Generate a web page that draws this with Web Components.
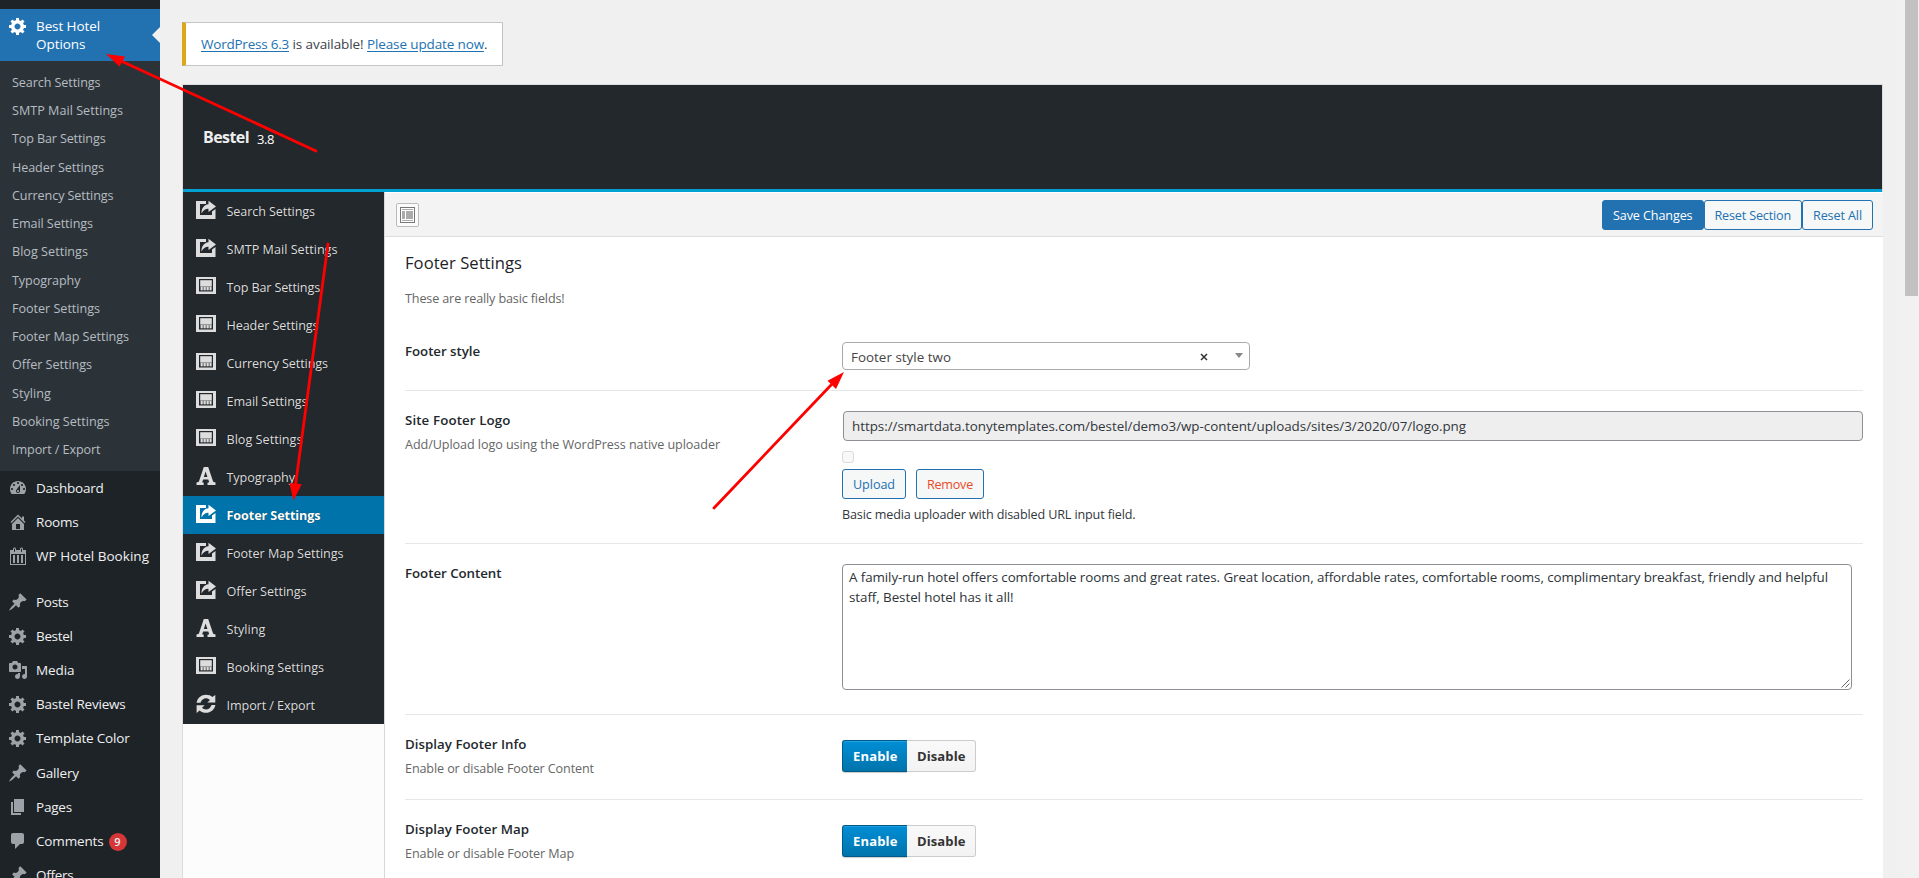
<!DOCTYPE html>
<html lang="en">
<head>
<meta charset="utf-8">
<title>Best Hotel Options</title>
<style>
    html, body {
        margin: 0;
        height: 878px;
        overflow: hidden;
    }
    body {
        display: flex;
        position: relative;
        background: #f0f0f0;
        color: #3c434a;
        font-family: "Open Sans", "Noto Sans", sans-serif;
        font-size: 12.6px;
        line-height: 18px;
    }
    main {
        flex: 1;
        min-width: 0;
        padding: 22px 20px 0 22px;
    }
</style>
</head>
<body>
<admin-menu></admin-menu>
<main>
    <update-notice></update-notice>
    <options-panel>
        <option-row class="first" label="Footer style" lw="75" height="72">
            <select-box></select-box>
        </option-row>
        <option-row label="Site Footer Logo" lw="105.5" desc="Add/Upload logo using the WordPress native uploader" dw="315" height="152">
            <media-field></media-field>
        </option-row>
        <option-row label="Footer Content" lw="96.5" height="170">
            <text-area></text-area>
        </option-row>
        <option-row label="Display Footer Info" lw="121.5" desc="Enable or disable Footer Content" dw="189" height="84">
            <toggle-switch></toggle-switch>
        </option-row>
        <option-row label="Display Footer Map" lw="124" desc="Enable or disable Footer Map" dw="169" height="84">
            <toggle-switch></toggle-switch>
        </option-row>
    </options-panel>
</main>
<page-scrollbar></page-scrollbar>
<red-arrows></red-arrows>

<script>
const ICONS = {
    gear: '<path d="M18 12h-2.18c-.17.7-.44 1.35-.81 1.93l1.54 1.54-2.1 2.1-1.54-1.54c-.58.36-1.23.63-1.91.79V19H8v-2.18c-.68-.16-1.33-.43-1.91-.79l-1.54 1.54-2.12-2.12 1.54-1.54c-.36-.58-.63-1.23-.79-1.91H1V9.03h2.17c.16-.7.44-1.35.8-1.94L2.43 5.55l2.1-2.1 1.54 1.54c.58-.37 1.24-.64 1.93-.81V2h3v2.18c.68.16 1.33.43 1.91.79l1.54-1.54 2.12 2.12-1.54 1.54c.36.59.64 1.24.8 1.94H18V12zm-8.5 1.5c1.66 0 3-1.34 3-3s-1.34-3-3-3-3 1.34-3 3 1.34 3 3 3z"/>',
    dashboard: '<path fill-rule="evenodd" d="M3.76 16h12.48c1.1-1.37 1.76-3.11 1.76-5 0-4.42-3.58-8-8-8s-8 3.58-8 8c0 1.89.66 3.63 1.76 5zM10 4c.55 0 1 .45 1 1s-.45 1-1 1-1-.45-1-1 .45-1 1-1zM6 6c.55 0 1 .45 1 1s-.45 1-1 1-1-.45-1-1 .45-1 1-1zm8 0c.55 0 1 .45 1 1s-.45 1-1 1-1-.45-1-1 .45-1 1-1zm-5.37 5.55L12 7v6c0 1.1-.9 2-2 2s-2-.9-2-2c0-.57.24-1.08.63-1.45zM4 10c.55 0 1 .45 1 1s-.45 1-1 1-1-.45-1-1 .45-1 1-1zm12 0c.55 0 1 .45 1 1s-.45 1-1 1-1-.45-1-1 .45-1 1-1zm-5 3c0-.55-.45-1-1-1s-1 .45-1 1 .45 1 1 1 1-.45 1-1z"/>',
    home: '<path d="M16 8.5l1.53 1.53-1.06 1.06L10 4.6l-6.47 6.49-1.06-1.06L10 2.5l4 4v-2h2v4zm-6-2.46l6 5.99V18H4v-5.97zM12 17v-5H8v5h4z"/>',
    calendar: '<path fill-rule="evenodd" d="M15 4h3v15H2V4h3V3c0-.83.67-1.5 1.5-1.5S8 2.17 8 3v1h4V3c0-.83.67-1.5 1.5-1.5S15 2.17 15 3v1zM6 3v2.5c0 .28.22.5.5.5s.5-.22.5-.5V3c0-.28-.22-.5-.5-.5S6 2.72 6 3zm7 0v2.5c0 .28.22.5.5.5s.5-.22.5-.5V3c0-.28-.22-.5-.5-.5s-.5.22-.5.5zm4 15V8H3v10h14z"/><path d="M5 9h2v8H5zM9 9h2v8H9zM13 9h2v8h-2z"/>',
    pin: '<path d="M10.44 3.02l1.82-1.82 6.36 6.35-1.83 1.82c-1.05-.68-2.48-.57-3.41.36l-.75.75c-.92.93-1.04 2.35-.35 3.41l-1.83 1.82-2.41-2.41-2.8 2.79c-.42.42-3.38 2.71-3.8 2.29s1.86-3.39 2.28-3.81l2.79-2.79L4.1 9.36l1.83-1.82c1.05.69 2.48.57 3.4-.36l.75-.75c.93-.92 1.05-2.35.36-3.41z"/>',
    media: '<path fill-rule="evenodd" d="M13 11V4c0-.55-.45-1-1-1h-1.67L9 1H5L3.67 3H2c-.55 0-1 .45-1 1v7c0 .55.45 1 1 1h10c.55 0 1-.45 1-1zM7 4.5c1.38 0 2.5 1.12 2.5 2.5S8.38 9.5 7 9.5 4.5 8.38 4.5 7 5.62 4.5 7 4.5zM14 6h5v10.5c0 1.38-1.12 2.5-2.5 2.5S14 17.88 14 16.5s1.12-2.5 2.5-2.5c.17 0 .34.02.5.05V9h-3V6zm-4 8.05V13h2v3.5c0 1.38-1.12 2.5-2.5 2.5S7 17.88 7 16.5 8.12 14 9.5 14c.17 0 .34.02.5.05z"/>',
    page: '<path d="M6 15V2h10v13H6zm-1 1h8v2H3V5h2v11z"/>',
    comment: '<path d="M5 2h9c1.1 0 2 .9 2 2v7c0 1.1-.9 2-2 2h-2l-5 5v-5H5c-1.1 0-2-.9-2-2V4c0-1.1.9-2 2-2z"/>',
    share: '<path d="M0 1h10v3H4v11h12v-3.500l3.500-2.500V19H0z"/><path d="M12.500 .8L20 6.500l-7.500 5.500V8.800C9.500 8.600 7.500 10 5.500 13.500 5.300 8.500 8 4.600 12.500 4.200z"/>',
    screen: '<path fill-rule="evenodd" d="M0 1h20v17H0zM3 3v12.500h14V3z"/><path d="M4.200 4.200h11.600v6.300H4.200z"/><path d="M4.200 10.500h11.600v3.800H4.200z" opacity=".55"/><path d="M5 11h1.500v3.300H5zM8 11h1.500v3.300H8zM11 11h1.500v3.300H11zM14 11h1.300v3.300H14z"/>',
    font: '<path fill-rule="evenodd" d="M7.800 1h4.400l5 14.800 2.300.7V19h-8v-2.200l1.700-.6-.9-2.700H7.100l-.9 2.700 1.500.6V19H.5v-2.500l2.300-.7zM9.600 5.600L7.900 10.900h3.500z"/>',
    refresh: '<path d="M.6 8.700C1.400 4 5.300.8 10.100.8c2.500 0 4.600.8 6.300 2.300L19.300.9v7.600h-8l2.700-2.600c-3.400-3-7.800-1.900-9.500 2.800zM19.400 10.900c-.9 4.600-4.700 7.900-9.500 7.900-2.500 0-4.600-.8-6.300-2.300L.6 18.900v-7.700h8.100L6 13.800c3.400 3 7.800 1.800 9.500-2.900z"/>'
};

// attach an open shadow root with the given markup
function render(el, html) {
    const root = el.attachShadow({ mode: "open" });
    root.innerHTML = html;
    return root;
}

// a run of text set to a given width
class FitText extends HTMLElement {
    connectedCallback() {
        if (this.shadowRoot) return;
        const root = render(this, `<style>
            :host{ display : inline-block; white-space : nowrap; }
            :host([link]) span{ text-decoration : underline; text-underline-offset : 2px; }
        </style><span><slot></slot></span>`);
        const width = parseFloat(this.getAttribute("w"));
        const natural = root.querySelector("span").getBoundingClientRect().width;
        this.style.letterSpacing = (width - natural) / this.textContent.length + "px";
        this.style.width = width + "px";
    }
}

class UiIcon extends HTMLElement {
    connectedCallback() {
        if (this.shadowRoot) return;
        render(this, `<style>
            :host{ display : block; width : 20px; height : 20px; }
            svg{ display : block; fill : currentColor; }
        </style><svg width="20" height="20" viewBox="0 0 20 20">${ICONS[this.getAttribute("name")]}</svg>`);
    }
}

class MenuEntry extends HTMLElement {
    constructor() {
        super();
        render(this, `<style>
            :host{
                display : flex;
                position : relative;
                height : 34.14px;
                color : #f0f0f1;
                font-size : 13.5px;
                line-height : 18.2px;
            }
            :host([current]){ height : 52px; background : #2271b1; color : #fff; }
            :host([current])::after{
                content : "";
                position : absolute;
                right : 0;
                top : 18px;
                border : 8px solid transparent;
                border-left : 0;
                border-right-color : #f0f0f0;
            }
            ui-icon{ width : 20px; margin : 7px 8px 0 8px; color : #9ca2a7; }
            :host([current]) ui-icon{ color : #fff; }
            .name{ padding-top : 8px; display : flex; }
            :host([current]) .name{ flex-direction : column; }
        </style>
        <ui-icon name="${this.getAttribute("icon")}"></ui-icon>
        <div class="name"><slot></slot></div>`);
    }
}

class AdminMenu extends HTMLElement {
    constructor() {
        super();
        const sub = SECTIONS.map(([name, w]) => `<li><fit-text w="${w}">${name}</fit-text></li>`).join("");
        const entry = ([icon, name, w]) => `<menu-entry icon="${icon}"><fit-text w="${w}">${name}</fit-text></menu-entry>`;
        const top = [["dashboard", "Dashboard", 67.5], ["home", "Rooms", 42.5], ["calendar", "WP Hotel Booking", 113]];
        const rest = [
            ["pin", "Posts", 32.5], ["gear", "Bestel", 36.5], ["media", "Media", 38.5],
            ["gear", "Bastel Reviews", 89.5], ["gear", "Template Color", 93.5],
            ["pin", "Gallery", 43], ["page", "Pages", 36]
        ];
        render(this, `<style>
            :host{
                display : block;
                flex : none;
                box-sizing : border-box;
                width : 160px;
                height : 878px;
                padding-top : 9px;
                overflow : hidden;
                background : #1d2327;
            }
            ul{
                margin : 0;
                padding : 8px 0 7px 12px;
                height : 395px;
                list-style : none;
                background : #2c3338;
                color : #b5bcc2;
            }
            li{ height : 28.24px; line-height : 28.24px; }
            .gap{ height : 11.6px; }
            b{
                width : 18px;
                height : 18px;
                margin : 1px 0 0 5px;
                border-radius : 50%;
                background : #d63638;
                font-size : 11px;
                font-weight : 600;
                line-height : 18px;
                text-align : center;
            }
        </style>
        <menu-entry icon="gear" current><fit-text w="64">Best Hotel</fit-text><fit-text w="49.5">Options</fit-text></menu-entry>
        <ul>${sub}</ul>
        ${top.map(entry).join("")}
        <div class="gap"></div>
        ${rest.map(entry).join("")}
        <menu-entry icon="comment"><fit-text w="67.5">Comments</fit-text><b>9</b></menu-entry>
        <menu-entry icon="pin"><fit-text w="37.5">Offers</fit-text></menu-entry>`);
    }
}

class UpdateNotice extends HTMLElement {
    constructor() {
        super();
        render(this, `<style>
            :host{
                display : block;
                box-sizing : border-box;
                width : 321px;
                height : 44px;
                padding-left : 15px;
                border : 1px solid #c3c4c7;
                border-left : 4px solid #dba617;
                background : #fff;
                font-size : 13.5px;
                line-height : 42px;
                white-space : nowrap;
            }
            a{ color : #2271b1; }
        </style><a><fit-text link w="88">WordPress 6.3</fit-text></a>&nbsp;<fit-text w="71">is available!</fit-text>&nbsp;<a><fit-text link w="117">Please update now</fit-text></a>.`);
    }
}

class SectionTab extends HTMLElement {
    constructor() {
        super();
        render(this, `<style>
            :host{
                display : flex;
                align-items : center;
                height : 38px;
                padding-left : 13px;
                gap : 10.5px;
                color : #ddd;
                font-weight : 500;
                text-shadow : 0 0 1px rgba(0, 0, 0, 0.6);
            }
            :host([active]){ background : #0073aa; color : #fff; font-weight : 700; }
            ui-icon{ margin-bottom : 2px; }
            .name{ padding-top : 2px; }
        </style><ui-icon name="${this.getAttribute("icon")}"></ui-icon><div class="name"><slot></slot></div>`);
    }
}

class WpButton extends HTMLElement {
    constructor() {
        super();
        render(this, `<style>
            :host{
                display : block;
                box-sizing : border-box;
                height : 30px;
                padding : 0 10px;
                border : 1px solid #2271b1;
                border-radius : 3px;
                background : #f6f7f7;
                color : #2271b1;
                line-height : 29px;
            }
            :host([primary]){ background : #2271b1; color : #fff; }
            :host([danger]){ color : #ea4b26; }
        </style><slot></slot>`);
    }
}

class OptionsPanel extends HTMLElement {
    constructor() {
        super();
        const tabs = SECTIONS.map(([name, w, icon]) => name === "Footer Settings"
            ? `<section-tab icon="${icon}" active><fit-text w="94">${name}</fit-text></section-tab>`
            : `<section-tab icon="${icon}"><fit-text w="${w}">${name}</fit-text></section-tab>`).join("");
        render(this, `<style>
            :host{
                display : block;
                margin-top : 18px;
                border : 1px solid #dcdcde;
                height : 800px;
                background : #fcfcfc;
            }
            header{
                display : flex;
                align-items : center;
                box-sizing : border-box;
                height : 107px;
                padding-left : 20px;
                gap : 8px;
                border-bottom : 3px solid #00a0d2;
                background : #23282d;
                color : #eee;
            }
            h2{ margin : 0; font-size : 16px; font-weight : 700; }
            .version{ margin-top : 4px; font-size : 13px; color : #fff; }
            .body{ display : flex; height : 690px; }
            nav{ width : 201px; flex : none; }
            .tabs{ background : #23282d; }
            .main{ flex : 1; border-left : 1px solid #d8d8d8; background : #fff; }
            .bar{
                display : flex;
                align-items : center;
                justify-content : space-between;
                box-sizing : border-box;
                height : 45px;
                padding : 0 10px 0 11px;
                border-bottom : 1px solid #dedede;
                border-top : 1px solid #fff;
                background : #f3f3f3;
            }
            .buttons{ display : flex; margin-top : 1px; }
            .expand{
                display : grid;
                place-items : center;
                box-sizing : border-box;
                width : 23px;
                height : 24px;
                border : 1px solid #bbb;
                border-radius : 2px;
                background : #fbfbfb;
            }
            .content{ padding : 0 20px; }
            h3{ margin : 0; padding-top : 13px; font-size : 16.6px; font-weight : 500; line-height : 26px; color : #1d2327; }
            p{ margin : 13px 0 9px; line-height : 20px; color : #666; }
        </style>
        <header><h2><fit-text w="46">Bestel</fit-text></h2><div class="version"><fit-text w="17">3.8</fit-text></div></header>
        <div class="body">
            <nav><div class="tabs">${tabs}</div></nav>
            <div class="main">
                <div class="bar">
                    <div class="expand">
                        <svg width="15" height="16" viewBox="0 0 15 16">
                            <rect x=".5" y=".5" width="14" height="15" fill="#fff" stroke="#777"/>
                            <path d="M2 2h11v1H2zM2 4h3v8H2zM6 4h7v8H6zM2 13h11v1H2z" fill="#aaa"/>
                        </svg>
                    </div>
                    <div class="buttons">
                        <wp-button primary><fit-text w="79.5">Save Changes</fit-text></wp-button>
                        <wp-button><fit-text w="76.5">Reset Section</fit-text></wp-button>
                        <wp-button><fit-text w="49">Reset All</fit-text></wp-button>
                    </div>
                </div>
                <div class="content">
                    <h3><fit-text w="117">Footer Settings</fit-text></h3>
                    <p><fit-text w="159.5">These are really basic fields!</fit-text></p>
                    <slot></slot>
                </div>
            </div>
        </div>`);
    }
}

class OptionRow extends HTMLElement {
    constructor() {
        super();
        const desc = this.getAttribute("desc");
        render(this, `<style>
            :host{
                display : flex;
                box-sizing : content-box;
                height : ${this.getAttribute("height")}px;
                border-bottom : 1px solid #e7e7e7;
            }
            .head{ width : 437px; flex : none; padding-top : 19px; }
            :host(.first) .head{ padding-top : 23px; }
            .label{ font-size : 13.3px; font-weight : 600; line-height : 20px; color : #23282d; }
            .desc{ margin-top : 5px; line-height : 20px; color : #666; }
            .field{ flex : 1; padding-top : 20px; }
        </style>
        <div class="head">
            <div class="label"><fit-text w="${this.getAttribute("lw")}">${this.getAttribute("label")}</fit-text></div>
            ${desc ? `<div class="desc"><fit-text w="${this.getAttribute("dw")}">${desc}</fit-text></div>` : ""}
        </div>
        <div class="field"><slot></slot></div>`);
    }
}

class SelectBox extends HTMLElement {
    constructor() {
        super();
        render(this, `<style>
            :host{
                display : flex;
                align-items : center;
                box-sizing : border-box;
                width : 408px;
                height : 28px;
                margin-top : 4px;
                padding : 0 6px 0 8px;
                border : 1px solid #aaa;
                border-radius : 4px;
                color : #444;
                font-size : 13.4px;
            }
            fit-text{ padding-top : 2px; }
            .clear{ margin : 2px 27px 0 auto; }
            i{ margin-top : -1px; border : 4px solid transparent; border-top : 5px solid #888; border-bottom : 0; }
            svg{ display : block; }
        </style>
        <fit-text w="100">Footer style two</fit-text>
        <svg class="clear" width="8" height="8" viewBox="0 0 8 8"><path d="M1 1l6 6M7 1L1 7" stroke="#333" stroke-width="1.5"/></svg>
        <i></i>`);
    }
}

class MediaField extends HTMLElement {
    constructor() {
        super();
        render(this, `<style>
            :host{ display : block; color : #32373c; }
            .url{
                box-sizing : border-box;
                width : 1020px;
                height : 30px;
                margin-left : 1px;
                padding-left : 8px;
                border : 1px solid #8c8f94;
                border-radius : 4px;
                background : #eee;
                font-size : 13.4px;
                line-height : 28px;
            }
            .check{
                box-sizing : border-box;
                width : 12px;
                height : 12px;
                margin : 10px 0 6px;
                border : 1px solid #dcdcde;
                border-radius : 3px;
                background : #f8f8f8;
            }
            .buttons{ display : flex; gap : 10px; }
            .note{ margin-top : 7px; }
        </style>
        <div class="url"><fit-text w="614">https://smartdata.tonytemplates.com/bestel/demo3/wp-content/uploads/sites/3/2020/07/logo.png</fit-text></div>
        <div class="check"></div>
        <div class="buttons">
            <wp-button><fit-text w="42">Upload</fit-text></wp-button>
            <wp-button danger><fit-text w="46">Remove</fit-text></wp-button>
        </div>
        <div class="note"><fit-text w="293.5">Basic media uploader with disabled URL input field.</fit-text></div>`);
    }
}

class TextArea extends HTMLElement {
    constructor() {
        super();
        render(this, `<style>
            :host{
                display : flex;
                flex-direction : column;
                position : relative;
                box-sizing : border-box;
                width : 1010px;
                height : 126px;
                padding : 2px 6px;
                border : 1px solid #8c8f94;
                border-radius : 4px;
                background : #fff;
                color : #2c3338;
                font-size : 13.4px;
                line-height : 20px;
            }
            svg{ position : absolute; right : 1px; bottom : 1px; }
        </style>
        <fit-text w="979">A family-run hotel offers comfortable rooms and great rates. Great location, affordable rates, comfortable rooms, complimentary breakfast, friendly and helpful</fit-text>
        <fit-text w="164.5">staff, Bestel hotel has it all!</fit-text>
        <svg width="9" height="9" viewBox="0 0 9 9"><path d="M.5 8.5l8-8M4.500 8.500l4-4" stroke="#555" stroke-width=".9"/></svg>`);
    }
}

class ToggleSwitch extends HTMLElement {
    constructor() {
        super();
        render(this, `<style>
            :host{ display : flex; padding-top : 5px; font-weight : 700; font-size : 13px; line-height : 30px; }
            div{ box-sizing : border-box; height : 32px; border : 1px solid; }
            .on{
                width : 65px;
                padding-left : 10px;
                border-color : #005a87;
                border-right : 0;
                border-radius : 3px 0 0 3px;
                background : linear-gradient(#008ed6, #0074ab);
                box-shadow : inset 0 1px 0 #20a0e0, 0 1px 1px rgba(0, 0, 0, 0.2);
                color : #fff;
            }
            .off{
                width : 69px;
                padding-left : 10px;
                border-color : #ccc;
                border-left : 0;
                border-radius : 0 3px 3px 0;
                background : linear-gradient(#f9f9f9, #f3f3f3);
                color : #333;
            }
        </style>
        <div class="on"><fit-text w="44.5">Enable</fit-text></div>
        <div class="off"><fit-text w="48.5">Disable</fit-text></div>`);
    }
}

class PageScrollbar extends HTMLElement {
    constructor() {
        super();
        render(this, `<style>
            :host{ display : block; flex : none; box-sizing : border-box; width : 16px; padding : 0 1px 0 2px; background : #f1f1f1; }
            div{ height : 296px; background : #c1c1c1; }
        </style><div></div>`);
    }
}

// annotation arrows lying over the whole page
class RedArrows extends HTMLElement {
    constructor() {
        super();
        render(this, `<style>
            :host{ position : absolute; left : 0; top : 0; pointer-events : none; }
            svg{ display : block; fill : #f00; stroke : #f00; }
            path{ stroke-width : 2.8; stroke-linecap : round; }
            polygon{ stroke : none; }
        </style>
        <svg width="1919" height="878">
            <path d="M316 151L120 60.500M328 244L295.500 485M714 508L832 384"/>
            <polygon points="106,54 125,56.500 119.500,66.500"/>
            <polygon points="293.500,500.500 289.300,483 301.700,484.300"/>
            <polygon points="844,372 827.500,380.800 836,389"/>
        </svg>`);
    }
}

// name, text width, tab icon
const SECTIONS = [
    ["Search Settings", 88.5, "share"],
    ["SMTP Mail Settings", 111, "share"],
    ["Top Bar Settings", 93.5, "screen"],
    ["Header Settings", 92, "screen"],
    ["Currency Settings", 101.5, "screen"],
    ["Email Settings", 81, "screen"],
    ["Blog Settings", 76, "screen"],
    ["Typography", 68.5, "font"],
    ["Footer Settings", 88, "share"],
    ["Footer Map Settings", 117, "share"],
    ["Offer Settings", 80, "share"],
    ["Styling", 39, "font"],
    ["Booking Settings", 97.5, "screen"],
    ["Import / Export", 88.5, "refresh"]
];

// containers first, so that text is measured inside its final styles
customElements.define("admin-menu", AdminMenu);
customElements.define("menu-entry", MenuEntry);
customElements.define("update-notice", UpdateNotice);
customElements.define("options-panel", OptionsPanel);
customElements.define("section-tab", SectionTab);
customElements.define("option-row", OptionRow);
customElements.define("select-box", SelectBox);
customElements.define("media-field", MediaField);
customElements.define("text-area", TextArea);
customElements.define("toggle-switch", ToggleSwitch);
customElements.define("wp-button", WpButton);
customElements.define("page-scrollbar", PageScrollbar);
customElements.define("red-arrows", RedArrows);
customElements.define("ui-icon", UiIcon);
customElements.define("fit-text", FitText);
</script>
</body>
</html>
